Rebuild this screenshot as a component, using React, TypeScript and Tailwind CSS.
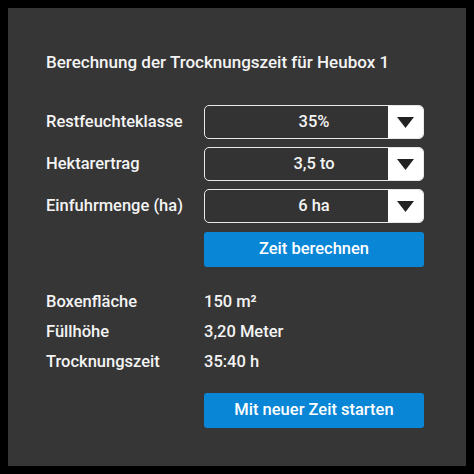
import React from 'react';

interface SelectRowProps {
  label: string;
  value: string;
}

const SelectRow: React.FC<SelectRowProps> = ({ label, value }) => {
  return (
    <div className="flex items-center h-[34px]">
      <span className="w-[158px] shrink-0">{label}</span>
      <div className="relative flex-1 h-full rounded-[5px] border-[1.5px] border-[#e8e8e8] bg-[#333333] flex overflow-hidden">
        <span className="absolute inset-0 flex items-center justify-center">{value}</span>
        <div className="ml-auto w-[35px] h-full bg-white flex items-center justify-center">
          <svg width="17" height="11" viewBox="0 0 17 11">
            <polygon points="0,0 17,0 8.5,11" fill="#222222" />
          </svg>
        </div>
      </div>
    </div>
  );
};

const results = [
  { label: 'Boxenfläche', value: '150 m²' },
  { label: 'Füllhöhe', value: '3,20 Meter' },
  { label: 'Trocknungszeit', value: '35:40 h' },
];

export default function App() {
  return (
    <div className="w-[474px] h-[474px] bg-black p-2">
      <div
        className="w-full h-full bg-[#363636] text-[#f4f4f4] pl-[38px] pr-[42px] pt-[44px] font-medium text-[16.5px]"
        style={{ fontFamily: 'Roboto, "Noto Sans", sans-serif' }}
      >
        <h1 className="text-[17px] font-medium h-[20px] leading-[20px]">
          Berechnung der Trocknungszeit für Heubox 1
        </h1>
        <div className="mt-[33px] flex flex-col gap-[8px]">
          <SelectRow label="Restfeuchteklasse" value="35%" />
          <SelectRow label="Hektarertrag" value="3,5 to" />
          <SelectRow label="Einfuhrmenge (ha)" value="6 ha" />
          <div className="flex pl-[158px] pt-[1px]">
            <button className="flex-1 h-[35px] rounded-[3px] bg-[#0a86d6] text-white">
              Zeit berechnen
            </button>
          </div>
        </div>
        <div className="mt-[20px] flex flex-col">
          {results.map(r => (
            <div key={r.label} className="flex h-[30px] items-center">
              <span className="w-[158px] shrink-0">{r.label}</span>
              <span>{r.value}</span>
            </div>
          ))}
        </div>
        <div className="flex pl-[158px] mt-[16px]">
          <button className="flex-1 h-[35px] rounded-[3px] bg-[#0a86d6] text-white">
            Mit neuer Zeit starten
          </button>
        </div>
      </div>
    </div>
  );
}
